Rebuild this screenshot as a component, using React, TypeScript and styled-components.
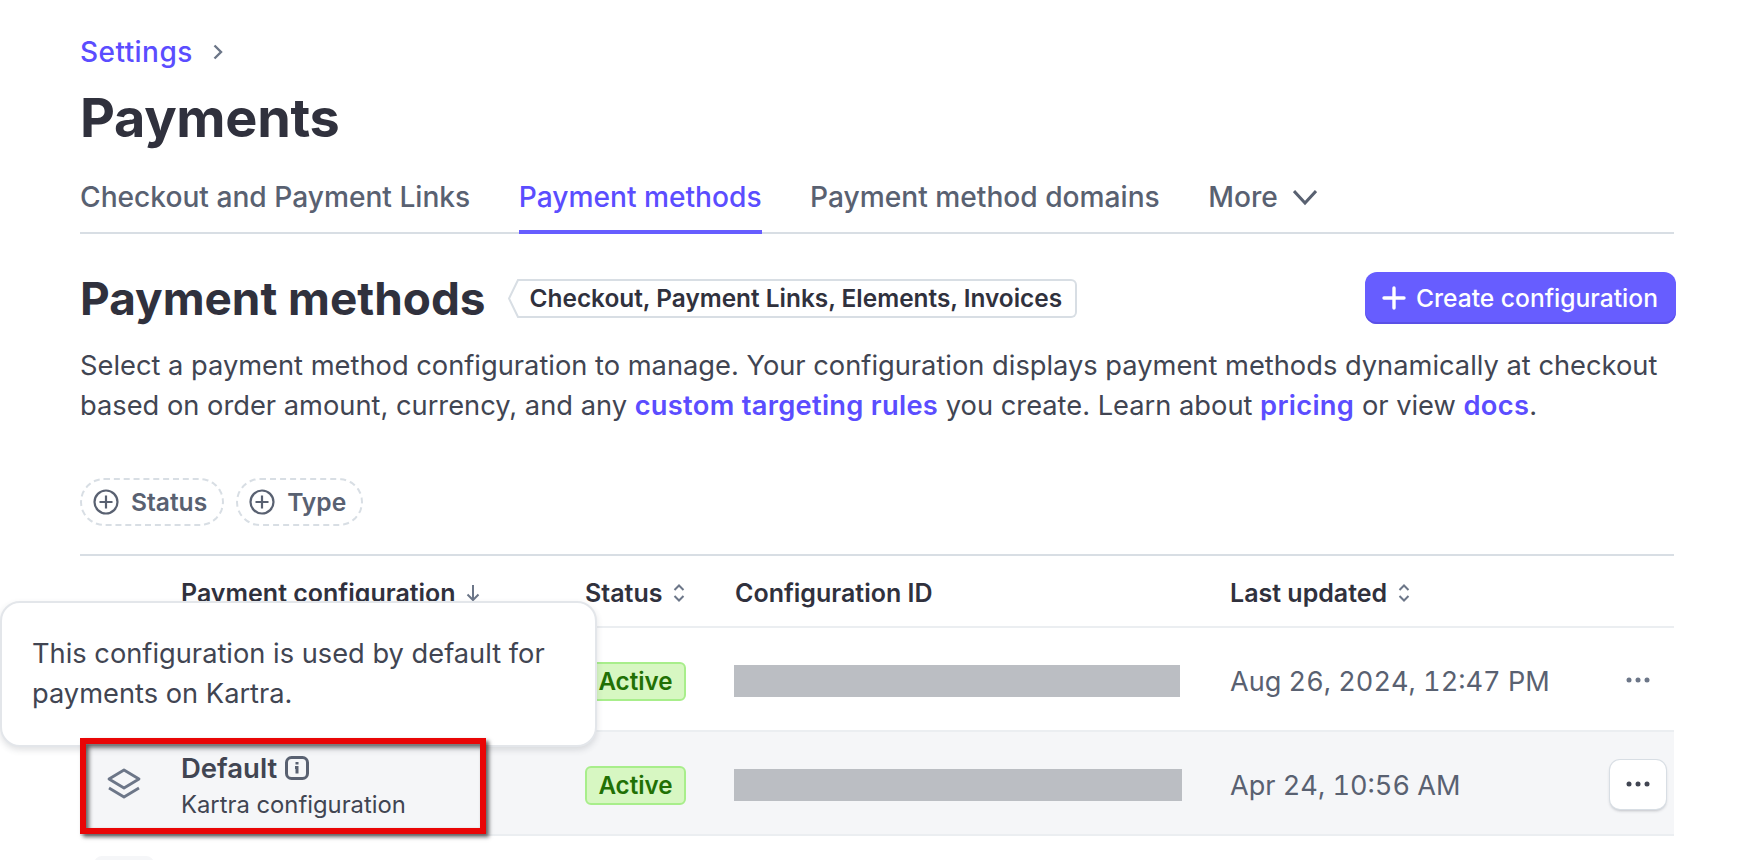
import React from 'react'
import styled, {createGlobalStyle} from 'styled-components'

const GlobalStyle = createGlobalStyle`
    html, body {
        margin: 0;
        height: 860px;
        overflow: hidden;
        background: #fff;
        font-family: Inter, "Noto Sans", sans-serif;
        color: #414552;
    }
`

const Page = styled.main`
    position: relative;
    height: 860px;
    overflow: hidden;
    box-sizing: border-box;
    padding: 32px 66px 0 80px;
`

const Breadcrumb = styled.nav`
    display: flex;
    align-items: center;
    gap: 20px;
    height: 40px;
    font-size: 28px;
    letter-spacing: 0.45px;
    font-weight: 500;
    color: #5b4dff;
    svg {
        color: #6c7688;
    }
`

const Title = styled.h1`
    margin: 14px 0 0;
    height: 63px;
    font-size: 54px;
    line-height: 64px;
    font-weight: 700;
    letter-spacing: -0.3px;
    color: #30313d;
`

const Tabs = styled.div`
    display: flex;
    gap: 48.5px;
    height: 57px;
    box-sizing: border-box;
    margin-top: 28px;
    border-bottom: 2px solid #d8dee4;
`

const Tab = styled.div<{$active?: boolean}>`
    display: flex;
    align-items: flex-start;
    gap: 15px;
    height: 57px;
    box-sizing: border-box;
    line-height: 40px;
    font-size: 28.15px;
    font-weight: 500;
    color: ${p => (p.$active ? '#5b4dff' : '#596171')};
    border-bottom: ${p => (p.$active ? '4px solid #675dff' : 'none')};
    svg {
        margin-top: 9px;
    }
`

const HeadingRow = styled.div`
    display: flex;
    align-items: center;
    justify-content: space-between;
    height: 52px;
    margin: 38px -2px 0 0;
`

const HeadingGroup = styled.div`
    display: flex;
    align-items: center;
    gap: 21px;
`

const Heading = styled.h2`
    margin: 0;
    padding-top: 2px;
    font-size: 45.9px;
    line-height: 52px;
    font-weight: 700;
    color: #30313d;
`

const Tag = styled.div`
    display: flex;
    align-items: stretch;
    height: 39px;
`

const TagBody = styled.span`
    display: flex;
    align-items: center;
    padding: 0 13px 0 8px;
    border: 2px solid #d8dee4;
    border-left: none;
    border-radius: 0 6px 6px 0;
    font-size: 24.4px;
    font-weight: 600;
    color: #30313d;
`

const PrimaryButton = styled.button`
    display: flex;
    align-items: center;
    gap: 10px;
    height: 52px;
    width: 311px;
    box-sizing: border-box;
    padding: 0 0 0 17px;
    border: none;
    border-radius: 12px;
    background: #675dff;
    box-shadow: inset 0 -2px 0 #5a50e6;
    color: #fff;
    font-family: inherit;
    font-size: 24.6px;
    font-weight: 500;
`

const Description = styled.p`
    margin: 22px 0 0;
    font-size: 27.27px;
    line-height: 40px;
    color: #414552;
    white-space: nowrap;
    a {
        color: #5b4dff;
        font-weight: 600;
        letter-spacing: 0.3px;
        text-decoration: none;
    }
`

const Filters = styled.div`
    display: flex;
    gap: 12px;
    margin-top: 52px;
`

const FilterPill = styled.div`
    display: flex;
    align-items: center;
    gap: 12px;
    height: 48px;
    box-sizing: border-box;
    padding: 0 15px 0 11px;
    border: 2px dashed #d8dee4;
    border-radius: 24px;
    font-size: 24.6px;
    font-weight: 600;
    color: #596171;
`

const Table = styled.div`
    margin-top: 28px;
`

const Row = styled.div<{$hover?: boolean; $head?: boolean}>`
    display: grid;
    grid-template-columns: 101px 404px 150px 495px 1fr 64px;
    align-items: center;
    height: ${p => (p.$head ? '74px' : '104px')};
    box-sizing: border-box;
    padding-top: ${p => (p.$head ? '0' : '4px')};
    border-bottom: 2px solid #ebeef1;
    background: ${p => (p.$hover ? '#f5f6f8' : 'transparent')};
    ${p => p.$head && 'border-top: 2px solid #d8dee4;'}
`

const HeadCell = styled.div`
    display: flex;
    align-items: center;
    gap: 10px;
    font-size: 25px;
    font-weight: 600;
    color: #30313d;
    padding-top: 3px;
`

const IconCell = styled.div`
    display: flex;
    justify-content: center;
    padding-right: 14px;
    margin-top: -4px;
    color: #6c7688;
`

const IconTile = styled.div`
    width: 60px;
    height: 66px;
    border-radius: 8px;
    margin: 0 0 0 14px;
    background: #f5f6f8;
`

const ConfigCell = styled.div`
    padding-top: 5px;
`

const ConfigName = styled.div`
    display: flex;
    align-items: center;
    gap: 8px;
    font-size: 27.5px;
    line-height: 34px;
    font-weight: 600;
    color: #414552;
    svg {
        color: #596171;
    }
`

const ConfigSub = styled.div`
    font-size: 23.8px;
    line-height: 40px;
    color: #414552;
`

const Badge = styled.span`
    display: inline-flex;
    align-items: center;
    justify-content: center;
    width: 101px;
    height: 39px;
    box-sizing: border-box;
    border: 2px solid #a8ee8b;
    border-radius: 6px;
    background: #d7f7c2;
    font-size: 24.2px;
    font-weight: 600;
    color: #217005;
`

const Redacted = styled.div<{$width: number}>`
    width: ${p => p.$width}px;
    height: 32px;
    margin-left: -1px;
    background: #bbbec3;
`

const DateCell = styled.div`
    font-size: 27.1px;
    font-variant-numeric: tabular-nums;
    color: #596171;
`

const ActionCell = styled.div`
    display: flex;
    justify-content: flex-end;
    padding-right: 8px;
    margin-top: -2px;
`

const DotsButton = styled.div<{$raised?: boolean}>`
    display: flex;
    align-items: center;
    justify-content: center;
    width: 56px;
    height: 49px;
    border-radius: 10px;
    color: ${p => (p.$raised ? '#414552' : '#6c7688')};
    background: ${p => (p.$raised ? '#fff' : 'transparent')};
    box-shadow: ${p => (p.$raised ? '0 0 0 1px #d8dee4, 0 2px 3px rgba(64, 68, 82, 0.3)' : 'none')};
`

const Tooltip = styled.div`
    position: absolute;
    left: 0;
    top: 601px;
    width: 597px;
    height: 146px;
    box-sizing: border-box;
    padding: 31px 30px;
    border: 2px solid #e3e6ea;
    border-radius: 20px;
    background: #fff;
    box-shadow: 0 3px 6px rgba(64, 68, 82, 0.16);
    font-size: 27.25px;
    line-height: 40px;
    white-space: nowrap;
    color: #414552;
`

const Highlight = styled.div`
    position: absolute;
    left: 80px;
    top: 738px;
    width: 406px;
    height: 96px;
    box-sizing: border-box;
    border: 6px solid #e90606;
    box-shadow: 3px 3px 4px rgba(0, 0, 0, 0.6), inset 3px 3px 4px rgba(0, 0, 0, 0.6);
    pointer-events: none;
`

const SortBoth = () => (
    <svg width="14" height="20" viewBox="0 0 14 20" fill="none" stroke="#6c7688" strokeWidth="2">
        <path d="M2.5 7 7 2.5 11.5 7M2.5 13 7 17.5 11.5 13" />
    </svg>
)

const Dots = () => (
    <svg width="24" height="6" viewBox="0 0 24 6" fill="currentColor">
        <circle cx="3" cy="3" r="2.5" />
        <circle cx="12" cy="3" r="2.5" />
        <circle cx="21" cy="3" r="2.5" />
    </svg>
)

const PlusCircle = () => (
    <svg width="26" height="26" viewBox="0 0 26 26" fill="none" stroke="#596171" strokeWidth="2.2">
        <circle cx="13" cy="13" r="11.5" />
        <path d="M13 6.5v13M6.5 13h13" />
    </svg>
)

const Layers = () => (
    <svg width="34" height="31" viewBox="0 0 34 31" fill="none" stroke="currentColor" strokeWidth="2.8" strokeLinejoin="round">
        <path d="M17 2 32 11 17 20 2 11Z" />
        <path d="M2 20 17 29 32 20" />
    </svg>
)

const rows = [
    {date: 'Aug 26, 2024, 12:47 PM', bar: 446},
    {date: 'Apr 24, 10:56 AM', bar: 448, hover: true},
]

export default function App() {
    return (
        <Page>
            <GlobalStyle />
            <Breadcrumb>
                Settings
                <svg width="10" height="16" viewBox="0 0 10 16" fill="none" stroke="currentColor" strokeWidth="2.4">
                    <path d="M1.5 1.5 8 8 1.5 14.5" />
                </svg>
            </Breadcrumb>
            <Title>Payments</Title>
            <Tabs>
                <Tab>Checkout and Payment Links</Tab>
                <Tab $active>Payment methods</Tab>
                <Tab>Payment method domains</Tab>
                <Tab>
                    More
                    <svg width="24" height="22" viewBox="0 0 24 22" fill="none" stroke="currentColor" strokeWidth="3">
                        <path d="M1 5 12 17 23 5" />
                    </svg>
                </Tab>
            </Tabs>
            <HeadingRow>
                <HeadingGroup>
                    <Heading>Payment methods</Heading>
                    <Tag>
                        <svg width="15" height="39" viewBox="0 0 15 39" fill="none" stroke="#d8dee4" strokeWidth="2">
                            <path d="M15 1H11L2 19.5 11 38H15" />
                        </svg>
                        <TagBody>Checkout, Payment Links, Elements, Invoices</TagBody>
                    </Tag>
                </HeadingGroup>
                <PrimaryButton>
                    <svg width="24" height="24" viewBox="0 0 24 24" fill="none" stroke="#fff" strokeWidth="3.4" strokeLinecap="round">
                        <path d="M12 2v20M2 12h20" />
                    </svg>
                    Create configuration
                </PrimaryButton>
            </HeadingRow>
            <Description>
                Select a payment method configuration to manage. Your configuration displays payment methods dynamically at checkout
                <br />
                based on order amount, currency, and any <a>custom targeting rules</a> you create. Learn about <a>pricing</a> or view <a>docs</a>.
            </Description>
            <Filters>
                <FilterPill>
                    <PlusCircle />
                    Status
                </FilterPill>
                <FilterPill>
                    <PlusCircle />
                    Type
                </FilterPill>
            </Filters>
            <Table>
                <Row $head>
                    <div />
                    <HeadCell>
                        Payment configuration
                        <svg width="14" height="18" viewBox="0 0 14 18" fill="none" stroke="#6c7688" strokeWidth="2">
                            <path d="M7 1v15M1.5 10.5 7 16l5.5-5.5" />
                        </svg>
                    </HeadCell>
                    <HeadCell>
                        Status
                        <SortBoth />
                    </HeadCell>
                    <HeadCell>Configuration ID</HeadCell>
                    <HeadCell>
                        Last updated
                        <SortBoth />
                    </HeadCell>
                    <div />
                </Row>
                {rows.map(row => (
                    <Row key={row.date} $hover={row.hover}>
                        <IconCell>
                            <Layers />
                        </IconCell>
                        <ConfigCell>
                            <ConfigName>
                                Default
                                <svg width="24" height="24" viewBox="0 0 24 24" fill="none" stroke="currentColor" strokeWidth="3">
                                    <rect x="1.5" y="1.5" width="21" height="21" rx="5" />
                                    <path d="M10 11.5h2v6M12 6v2.5" />
                                </svg>
                            </ConfigName>
                            <ConfigSub>Kartra configuration</ConfigSub>
                        </ConfigCell>
                        <div>
                            <Badge>Active</Badge>
                        </div>
                        <Redacted $width={row.bar} />
                        <DateCell>{row.date}</DateCell>
                        <ActionCell>
                            <DotsButton $raised={row.hover}>
                                <Dots />
                            </DotsButton>
                        </ActionCell>
                    </Row>
                ))}
                <Row>
                    <IconTile />
                </Row>
            </Table>
            <Tooltip>
                This configuration is used by default for
                <br />
                payments on Kartra.
            </Tooltip>
            <Highlight />
        </Page>
    )
}
